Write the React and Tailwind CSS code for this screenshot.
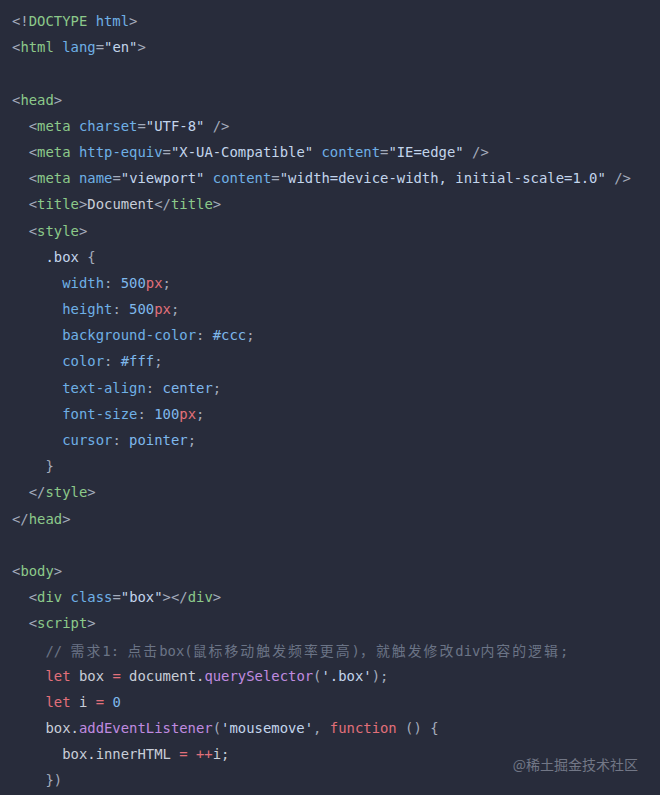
const C = {
  p: "text-[#a3abbb]",
  t: "text-[#8cc98a]",
  a: "text-[#6fb0e6]",
  s: "text-[#c3d5ec]",
  w: "text-[#c9ced8]",
  r: "text-[#e2707a]",
  f: "text-[#c08be0]",
  n: "text-[#7fb8ec]",
  c: "text-[#6b7486]",
};

const LINES = [
  [["p", "<!"], ["t", "DOCTYPE"], ["a", " html"], ["p", ">"]],
  [["p", "<"], ["t", "html"], ["a", " lang"], ["p", "="], ["s", '"en"'], ["p", ">"]],
  [],
  [["p", "<"], ["t", "head"], ["p", ">"]],
  [["w", "  "], ["p", "<"], ["t", "meta"], ["a", " charset"], ["p", "="], ["s", '"UTF-8"'], ["p", " />"]],
  [["w", "  "], ["p", "<"], ["t", "meta"], ["a", " http-equiv"], ["p", "="], ["s", '"X-UA-Compatible"'], ["a", " content"], ["p", "="], ["s", '"IE=edge"'], ["p", " />"]],
  [["w", "  "], ["p", "<"], ["t", "meta"], ["a", " name"], ["p", "="], ["s", '"viewport"'], ["a", " content"], ["p", "="], ["s", '"width=device-width, initial-scale=1.0"'], ["p", " />"]],
  [["w", "  "], ["p", "<"], ["t", "title"], ["p", ">"], ["w", "Document"], ["p", "</"], ["t", "title"], ["p", ">"]],
  [["w", "  "], ["p", "<"], ["t", "style"], ["p", ">"]],
  [["w", "    "], ["s", ".box"], ["p", " {"]],
  [["w", "      "], ["a", "width"], ["p", ": "], ["n", "500"], ["r", "px"], ["p", ";"]],
  [["w", "      "], ["a", "height"], ["p", ": "], ["n", "500"], ["r", "px"], ["p", ";"]],
  [["w", "      "], ["a", "background-color"], ["p", ": "], ["n", "#ccc"], ["p", ";"]],
  [["w", "      "], ["a", "color"], ["p", ": "], ["n", "#fff"], ["p", ";"]],
  [["w", "      "], ["a", "text-align"], ["p", ": "], ["n", "center"], ["p", ";"]],
  [["w", "      "], ["a", "font-size"], ["p", ": "], ["n", "100"], ["r", "px"], ["p", ";"]],
  [["w", "      "], ["a", "cursor"], ["p", ": "], ["n", "pointer"], ["p", ";"]],
  [["w", "    "], ["p", "}"]],
  [["w", "  "], ["p", "</"], ["t", "style"], ["p", ">"]],
  [["p", "</"], ["t", "head"], ["p", ">"]],
  [],
  [["p", "<"], ["t", "body"], ["p", ">"]],
  [["w", "  "], ["p", "<"], ["t", "div"], ["a", " class"], ["p", "="], ["s", '"box"'], ["p", "></"], ["t", "div"], ["p", ">"]],
  [["w", "  "], ["p", "<"], ["t", "script"], ["p", ">"]],
  [["w", "    "], ["c", "// "], ["cj", "需求"], ["c", "1: "], ["cj", "点击"], ["c", "box("], ["cj", "鼠标移动触发频率更高"], ["c", ")"], ["cj", "，就触发修改"], ["c", "div"], ["cj", "内容的逻辑"], ["c", ";"]],
  [["w", "    "], ["r", "let"], ["w", " box "], ["r", "="], ["w", " document."], ["f", "querySelector"], ["p", "("], ["s", "'.box'"], ["p", ");"]],
  [["w", "    "], ["r", "let"], ["w", " i "], ["r", "="], ["n", " 0"]],
  [["w", "    box."], ["f", "addEventListener"], ["p", "("], ["s", "'mousemove'"], ["p", ", "], ["r", "function"], ["p", " () {"]],
  [["w", "      box.innerHTML "], ["r", "="], ["r", " ++"], ["w", "i;"]],
  [["w", "    "], ["p", "})"]],
];

function Token({ kind, text }) {
  if (kind === "cj") {
    return (
      <span className="text-[#6b7486] tracking-[2px] font-['Noto_Sans_CJK_SC',sans-serif]">
        {text}
      </span>
    );
  }
  return <span className={C[kind]}>{text}</span>;
}

export default function App() {
  return (
    <div className="relative h-[795px] w-full overflow-hidden bg-[#282c3b]">
      <pre className="pl-3 pt-[8px] font-['DejaVu_Sans_Mono','Noto_Sans_CJK_SC',monospace] text-[13.9px] leading-[26.2px] whitespace-pre">
        {LINES.map((line, i) => (
          <div key={i} className="h-[26.2px]">
            {line.map(([k, t], j) => (
              <Token key={j} kind={k} text={t} />
            ))}
          </div>
        ))}
      </pre>
      <div className="absolute right-[22px] bottom-[20px] text-[14px] text-[#727786] font-['Noto_Sans_CJK_SC',sans-serif]">
        @稀土掘金技术社区
      </div>
    </div>
  );
}
